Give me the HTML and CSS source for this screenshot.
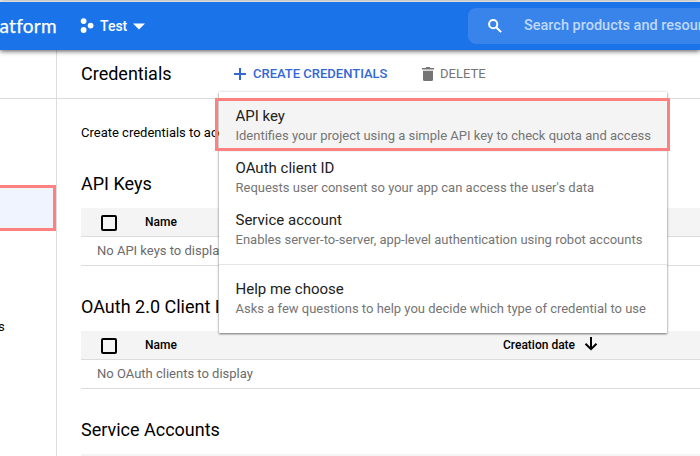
FILE: index.html
```html
<!DOCTYPE html>
<html lang="en">
<head>
<meta charset="utf-8">
<title>Credentials</title>
<link rel="stylesheet" href="styles.css">
</head>
<body>
<div class="app">
  <header class="topbar">
    <div class="brand"><span>atform</span></div>
    <div class="project">
      <svg class="project-icon" width="14" height="16" viewBox="0 0 14 16"><g fill="#fff"><circle cx="3.6" cy="3.1" r="2.9"/><circle cx="3.6" cy="12" r="2.9"/><circle cx="10.6" cy="7.6" r="2.9"/></g></svg>
      <span class="project-name">Test</span>
      <svg class="caret" width="12" height="7" viewBox="0 0 12 7"><path fill="#fff" d="M0 .5h12L6 6.5z"/></svg>
    </div>
    <div class="search">
      <svg width="14" height="14" viewBox="0 0 14 14" fill="none" stroke="#fff" stroke-width="2"><circle cx="5.2" cy="5.2" r="4.1"/><path d="M8.2 8.2l4.9 4.9"/></svg>
      <span>Search products and resources</span>
    </div>
  </header>
  <div class="body">
    <nav class="sidebar">
      <div class="side-active"></div>
      <div class="side-item">s</div>
    </nav>
    <main class="main">
      <div class="toolbar">
        <h1>Credentials</h1>
        <div class="action create">
          <svg width="12" height="12" viewBox="0 0 12 12" stroke="#3367d6" stroke-width="2"><path d="M6 0v12M0 6h12"/></svg>
          <span>CREATE CREDENTIALS</span>
        </div>
        <div class="action delete">
          <svg width="12" height="14" viewBox="0 0 12 14" fill="#757575"><path d="M0 1h3.5l.8-1h3.4l.8 1H12v1.6H0zM1 3.8h10V12.500a1.500 1.500 0 0 1-1.500 1.500h-7A1.500 1.500 0 0 1 1 12.500z"/></svg>
          <span>DELETE</span>
        </div>
      </div>
      <div class="content">
        <p class="intro">Create credentials to access</p>
        <h2>API Keys</h2>
        <div class="thead"><i class="check"></i><span class="name">Name</span></div>
        <div class="empty">No API keys to display</div>
        <h2 class="next">OAuth 2.0 Client IDs</h2>
        <div class="thead"><i class="check"></i><span class="name">Name</span><span class="date">Creation date</span>
          <svg class="sort" width="14" height="14" viewBox="0 0 14 14" fill="none" stroke="#000" stroke-width="2"><path d="M7 0v12M1.500 6.800L7 12.200l5.500-5.400"/></svg></div>
        <div class="empty">No OAuth clients to display</div>
        <h2 class="next">Service Accounts</h2>
        <div class="thead"></div>
      </div>
    </main>
  </div>
  <div class="menu">
    <div class="item hover"><b>API key</b><small>Identifies your project using a simple API key to check quota and access</small></div>
    <div class="item"><b>OAuth client ID</b><small>Requests user consent so your app can access the user's data</small></div>
    <div class="item"><b>Service account</b><small>Enables server-to-server, app-level authentication using robot accounts</small></div>
    <hr>
    <div class="item"><b>Help me choose</b><small>Asks a few questions to help you decide which type of credential to use</small></div>
  </div>
  <div class="callout"></div>
</div>
</body>
</html>
```
FILE: styles.css
```css
* { box-sizing: border-box; }
body { margin: 0; font-family: Roboto, sans-serif; color: #000; background: #fff; }
.app { position: relative; width: 700px; height: 456px; overflow: hidden; white-space: nowrap; display: flex; flex-direction: column; padding-top: 1px; }
svg { display: block; flex: none; }
.topbar { position: relative; flex: none; height: 49px; border-top: 1px solid #dcdcdc; background: #1a73e8; color: #fff; display: flex; align-items: center; box-shadow: 0 1px 5px rgba(0,0,0,.7); }
.brand { width: 57px; display: flex; justify-content: flex-end; font: 400 19px/24px Lato, sans-serif; letter-spacing: .3px; -webkit-text-stroke: .25px #fff; }
.project { display: flex; align-items: center; margin-left: 23px; width: 388px; flex: none; }
.project-name { font-weight: 500; font-size: 14px; margin: 0 6px 0 6px; }
.search { width: 260px; flex: none; height: 36px; border-radius: 8px; background: #3984eb; display: flex; align-items: center; padding-left: 20px; gap: 22px; font-size: 14.500px; font-weight: 500; color: #bfd8fa; }
.search span { padding-bottom: 2px; }
.brand, .search { flex: none; }
.body { flex: 1; display: flex; min-height: 0; }
.sidebar { width: 57px; flex: none; border-right: 1px solid #dcdcdc; font-size: 13px; }
.sidebar::before { content: ""; display: block; height: 48px; border-bottom: 1px solid #dcdcdc; }
.side-active { height: 46px; width: 56px; margin-top: 86px; background: #eff4ff; border: solid #fe8182; border-width: 3px 3px 3px 0; }
.side-item { margin-top: 87px; line-height: 18px; margin-left: -2px; }
.main { flex: 1; min-width: 0; }
.toolbar { height: 49px; border-bottom: 1px solid #dcdcdc; display: flex; align-items: center; padding-left: 24px; }
h1, h2 { margin: 0; font-weight: 400; font-size: 18px; line-height: 24px; }
h1 { width: 153px; }
.action { display: flex; align-items: center; font-size: 13px; }
.action span { position: relative; top: -1px; }
.create { width: 188px; gap: 7px; color: #3367d6; font-weight: 500; }
.delete { gap: 6px; color: #757575; }
.content { padding-left: 24px; }
.intro { margin: 25px 0 30px; font-size: 13px; line-height: 18px; }
.content h2 { margin-bottom: 12px; }
.thead { height: 29px; background: #f4f4f4; border-bottom: 1px solid #dcdcdc; display: flex; align-items: center; padding-left: 20px; font-size: 12px; font-weight: 500; }
.check { width: 16px; height: 16px; border: 2px solid #000; border-radius: 2px; margin: 2px 28px 0 0; }
.name { width: 358px; }
.date { width: 81px; }
.sort { margin-bottom: 2px; }
.empty { height: 29px; border-bottom: 1px solid #dcdcdc; padding-left: 16px; font-size: 13px; line-height: 28px; color: #6b6b6b; }
.content .next { margin-top: 29px; }
.menu { position: absolute; left: 219px; top: 92px; width: 448px; height: 241px; padding: 8px 0; background: #fff; box-shadow: 0 1px 2px rgba(0,0,0,.5), 0 0 3px rgba(0,0,0,.12); }
.item { height: 52px; padding: 6px 16.500px; }
.item b { display: block; font-weight: 400; font-size: 15px; line-height: 20px; color: #212121; }
.item small { display: block; font-size: 13px; line-height: 19px; color: #757575; }
.hover { background: #f4f4f4; }
hr { height: 1px; border: 0; margin: 8px 0; background: #e4e4e4; }
.callout { position: absolute; left: 215px; top: 98px; width: 455px; height: 53px; border: 3px solid #fe8182; }
```
